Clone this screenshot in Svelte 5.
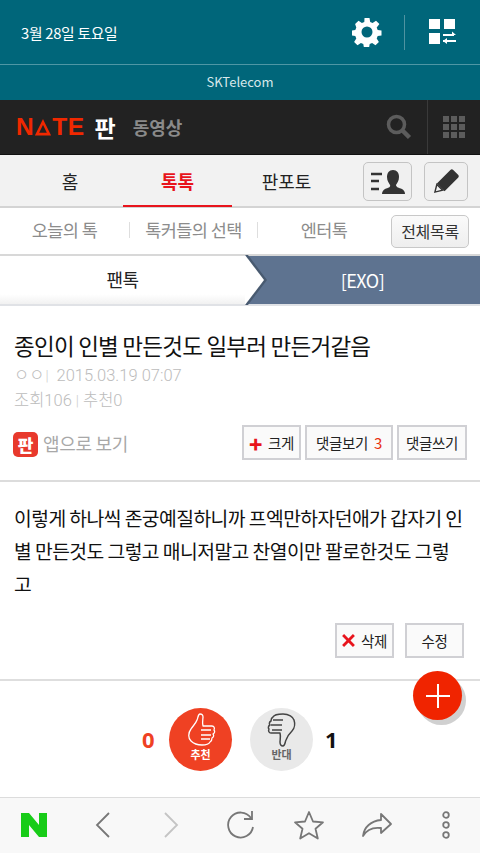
<script>
  const tabs = ["홈", "톡톡", "판포토"];
  const subs = ["오늘의 톡", "톡커들의 선택", "엔터톡"];
</script>

<div class="page">
  <div class="panel-top">
    <span class="date">3월 28일 토요일</span>
    <svg class="gear" viewBox="0 0 30 30" width="30" height="30" aria-hidden="true">
      <path fill="#fff" fill-rule="evenodd" d="M12.500 1h5l.7 4 2.400 1 3.400-2.300 3.400 3.400L24.700 10.500l1 2.400 3.800.7v4.800l-3.800.7-1 2.400 2.200 3.400-3.400 3.400-3.400-2.300-2.400 1-.7 3.900h-5l-.7-3.900-2.400-1-3.400 2.300-3.400-3.400 2.200-3.400-1-2.400-3.800-.7v-4.800l3.800-.7 1-2.400L3.100 7.100l3.400-3.400L9.900 6l2.400-1zM15 9.500a5.500 5.500 0 1 0 0 11 5.500 5.500 0 0 0 0-11z"/>
    </svg>
    <i class="top-sep"></i>
    <svg class="layout" viewBox="0 0 28 28" width="28" height="28" aria-hidden="true">
      <path fill="#fff" d="M0 1h11v10H0zM15 1h11v10H15zM0 15h11v11H0z"/>
      <path fill="none" stroke="#fff" stroke-width="2" d="M14 17h11M14 23h13"/>
      <path fill="#fff" d="M23 13.500l4 3.500h-4zM18 20v6l-4-3z"/>
    </svg>
  </div>
  <div class="carrier">SKTelecom</div>

  <header class="nate">
    <div class="logo">N<svg viewBox="0 0 16 16" width="16" height="17" aria-hidden="true"><path fill="none" stroke="#f02800" stroke-width="2.600" d="M8 2.500 14 14.600H2z"/></svg>TE</div>
    <span class="pan">판</span>
    <span class="section">동영상</span>
    <svg class="search" viewBox="0 0 26 26" width="26" height="26" aria-hidden="true">
      <circle cx="10.500" cy="10.500" r="8" fill="none" stroke="#5c5c5c" stroke-width="3.500"/>
      <path d="M16.500 16.500 23.500 23.500" stroke="#5c5c5c" stroke-width="4.500"/>
    </svg>
    <div class="apps">
      <div class="dots">
        {#each Array(9) as _}<i></i>{/each}
      </div>
    </div>
  </header>

  <nav class="tabs">
    <div class="tab-list">
      {#each tabs as t, i}
        <span class="tab" class:on={i === 1}>{t}</span>
      {/each}
    </div>
    <button class="tool tool-user" aria-label="내 정보">
      <svg viewBox="0 0 36 26" width="36" height="26" aria-hidden="true">
        <path stroke="#333" stroke-width="2.400" d="M1 5h11M1 12h8M1 20h8"/>
        <path fill="#333" d="M23 1c4 0 6 3 6 7s-2 6-3 8c0 2 3 3 6 4 2 1 3 3 3 5H12c0-2 1-4 3-5 3-1 6-2 5-4-1-2-3-4-3-8s2-7 6-7z"/>
      </svg>
    </button>
    <button class="tool tool-edit" aria-label="글쓰기">
      <svg viewBox="0 0 28 28" width="27" height="27" aria-hidden="true">
        <path fill="#333" d="M18 2c1-1 2-1 3 0l5 5c1 1 1 2 0 3L12 24l-8-8z"/>
        <path fill="none" stroke="#333" stroke-width="1.500" d="M4 17l-2 8 8-2z"/>
      </svg>
    </button>
  </nav>

  <div class="subnav">
    <div class="sub-list">
      {#each subs as s, i}
        {#if i > 0}<i class="sub-sep"></i>{/if}
        <span class="sub sub-{i}">{s}</span>
      {/each}
    </div>
    <button class="all">전체목록</button>
  </div>

  <div class="crumb">
    <span class="crumb-left">팬톡</span>
    <span class="crumb-right">[EXO]</span>
    <svg class="arrow" viewBox="0 0 24 50" width="24" height="50" preserveAspectRatio="none" aria-hidden="true">
      <path fill="#485a70" d="M0 0h3l19 25L3 50H0z"/>
      <path fill="#fff" d="M0 0l19 25L0 50z"/>
    </svg>
  </div>

  <section class="head">
    <h1>종인이 인별 만든것도 일부러 만든거같음</h1>
    <div class="meta">ㅇㅇ<span class="bar">|</span> 2015.03.19 07:07</div>
    <div class="stats">조회106 <span class="bar">|</span> 추천0</div>
    <div class="actions">
      <div class="badge">판</div>
      <span class="app-link">앱으로 보기</span>
      <div class="btns">
        <button class="btn big"><span class="plus">+</span> 크게</button>
        <button class="btn more">댓글보기 <em>3</em></button>
        <button class="btn write">댓글쓰기</button>
      </div>
    </div>
  </section>

  <article class="body">
    <p>이렇게 하나씩 존궁예질하니까 프엑만하자던애가 갑자기 인별 만든것도 그렇고 매니저말고 찬열이만 팔로한것도 그렇고</p>
    <div class="edit-btns">
      <button class="btn del"><svg viewBox="0 0 12 12" width="13" height="13" aria-hidden="true"><path stroke="#e8141c" stroke-width="2.600" d="M1 1l10 10M11 1 1 11"/></svg> 삭제</button>
      <button class="btn fix">수정</button>
    </div>
  </article>

  <section class="votes">
    <span class="count up">0</span>
    <div class="vote vote-up">
      <svg viewBox="0 0 30 34" width="30" height="34" aria-hidden="true">
        <path fill="none" stroke="#fff" stroke-width="1.300" stroke-linejoin="round" d="M14 1c-2 0-2 4-3 6-1 3-4 6-6 9-3 4-3 9 0 12 3 3 7 4 11 4 4 0 7-1 8-3 2-1 2-3 2-4 2-1 2-3 1-4 2-1 2-3 1-4 1-2 0-4-2-4h-9c-1-4 0-7 0-9s-1-3-3-3zM15 17h10M15 22h10M15 26h9"/>
      </svg>
      <span>추천</span>
    </div>
    <div class="vote vote-down">
      <svg viewBox="0 0 30 34" width="30" height="34" aria-hidden="true">
        <path fill="none" stroke="#444" stroke-width="1.500" stroke-linejoin="round" d="M16 33c2 0 2-4 3-6 1-3 3-6 6-9 3-3 3-8 2-11-1-3-5-6-11-6-5 0-9 1-10 3-2 1-2 3-2 4-2 1-2 3-1 4-2 1-2 3-1 4-1 2 0 4 2 4h9c1 4 0 7 0 9s1 4 3 4zM15 17H5M15 12H4M16 7H6"/>
      </svg>
      <span>반대</span>
    </div>
    <span class="count down">1</span>
    <button class="fab" aria-label="추가">
      <svg viewBox="0 0 24 24" width="24" height="24" aria-hidden="true"><path stroke="#fff" stroke-width="2" d="M12 0v24M0 12h24"/></svg>
    </button>
  </section>

  <footer class="browser">
    <svg viewBox="0 0 26 24" width="26" height="24" aria-hidden="true"><path fill="#18cc18" d="M0 0h8l10 12V0h8v24h-8L8 12v12H0z"/></svg>
    <svg viewBox="0 0 16 28" width="16" height="28" aria-hidden="true"><path fill="none" stroke="#777" stroke-width="1.800" d="M14 2 2 14l12 12"/></svg>
    <svg viewBox="0 0 16 28" width="16" height="28" aria-hidden="true"><path fill="none" stroke="#c4c4c4" stroke-width="1.800" d="M2 2l12 12L2 26"/></svg>
    <svg viewBox="0 0 30 30" width="30" height="30" aria-hidden="true"><path fill="none" stroke="#777" stroke-width="1.800" d="M26 8A12.500 12.500 0 1 0 28 17"/><path fill="none" stroke="#777" stroke-width="1.800" d="M27 1v8h-8"/></svg>
    <svg viewBox="0 0 32 30" width="32" height="30" aria-hidden="true"><path fill="none" stroke="#777" stroke-width="1.800" stroke-linejoin="round" d="M16 2l4 9.500 10 .8-7.500 6.500 2.300 9.700L16 23.200l-8.800 5.300 2.300-9.700L2 12.300l10-.8z"/></svg>
    <svg viewBox="0 0 32 26" width="32" height="26" aria-hidden="true"><path fill="none" stroke="#777" stroke-width="1.800" stroke-linejoin="round" d="M20 2l10 10-10 9v-5c-8-1-14 1-18 8 1-9 8-15 18-16z"/></svg>
    <svg viewBox="0 0 10 28" width="10" height="28" aria-hidden="true"><g fill="none" stroke="#777" stroke-width="1.800"><circle cx="5" cy="4" r="2.800"/><circle cx="5" cy="14" r="2.800"/><circle cx="5" cy="24" r="2.800"/></g></svg>
  </footer>
</div>

<style>
  :global(body) {
    margin: 0;
    background: #fff;
    font-family: "Noto Sans CJK KR", "Noto Sans", sans-serif;
  }

  .page {
    width: 480px;
    height: 853px;
    overflow: hidden;
    display: flex;
    flex-direction: column;
  }

  button {
    font-family: inherit;
    padding: 0;
    cursor: pointer;
  }

  .panel-top {
    height: 65px;
    box-sizing: border-box;
    display: flex;
    align-items: center;
    padding: 0 23px 0 21px;
    background: #00667a;
    border-bottom: 1px solid #4f97a5;
    flex: none;
  }

  .date {
    color: #fff;
    font-size: 14.800px;
    letter-spacing: -0.3px;
    margin-right: auto;
  }

  .top-sep {
    width: 1px;
    height: 35px;
    margin: 0 24px 0 22px;
    background: #4f93a1;
  }

  .carrier {
    height: 35px;
    flex: none;
    box-sizing: border-box;
    padding-bottom: 2px;
    display: flex;
    align-items: center;
    justify-content: center;
    background: #00667a;
    color: #d7e8eb;
    font-size: 13px;
  }

  .nate {
    height: 55px;
    flex: none;
    display: flex;
    align-items: center;
    box-sizing: border-box;
    padding-left: 16px;
    background: #222;
    border-bottom: 1px solid #111;
  }

  .logo {
    display: flex;
    align-items: center;
    gap: 1px;
    color: #f02800;
    font: 700 24.500px/1 "Liberation Sans", sans-serif;
    letter-spacing: 0.5px;
  }

  .pan {
    margin-left: 10px;
    color: #fff;
    font-size: 23px;
    font-weight: 700;
  }

  .section {
    margin-left: 17px;
    color: #8a8a8a;
    font-size: 18px;
    font-weight: 700;
    margin-right: auto;
  }

  .search {
    margin-right: 15px;
  }

  .apps {
    width: 53px;
    height: 100%;
    display: flex;
    align-items: center;
    justify-content: center;
    border-left: 1px solid #3a3a3a;
    box-sizing: border-box;
  }

  .dots {
    display: grid;
    grid-template-columns: repeat(3, 6px);
    gap: 2px;
  }

  .dots i {
    height: 6px;
    background: #5c5c5c;
  }

  .tabs {
    height: 53px;
    flex: none;
    box-sizing: border-box;
    display: flex;
    align-items: flex-start;
    background: #f2f2f2;
    border-bottom: 2px solid #d4d4d4;
  }

  .tab-list {
    display: flex;
    height: 52px;
    margin-left: 14px;
    margin-right: auto;
  }

  .tab {
    width: 109px;
    box-sizing: border-box;
    height: 52px;
    padding-top: 11px;
    text-align: center;
    color: #222;
    font-size: 18px;
    line-height: 30px;
  }

  .tab:first-child {
    padding-left: 3px;
  }

  .tab.on {
    color: #e8141c;
    font-weight: 700;
    border-bottom: 2px solid #e8141c;
  }

  .tool {
    height: 39px;
    margin-top: 7px;
    box-sizing: border-box;
    display: flex;
    align-items: center;
    justify-content: center;
    background: #f0f0f0;
    border: 1px solid #c4c4c4;
    border-radius: 5px;
  }

  .tool-user {
    width: 49px;
    margin-right: 12px;
  }

  .tool-edit {
    width: 44px;
    margin-right: 12px;
  }

  .subnav {
    height: 48px;
    flex: none;
    box-sizing: border-box;
    display: flex;
    align-items: center;
    background: #fff;
    border-bottom: 2px solid #d8d8d8;
  }

  .sub-list {
    display: flex;
    align-items: center;
    margin-right: auto;
    height: 100%;
    box-sizing: border-box;
    padding-bottom: 3px;
  }

  .sub {
    color: #8c8c8c;
    font-size: 17.500px;
    letter-spacing: -0.6px;
    text-align: center;
  }

  .sub-0 {
    width: 129px;
  }

  .sub-1 {
    width: 127px;
  }

  .sub-2 {
    width: 132px;
  }

  .sub-sep {
    width: 1px;
    height: 16px;
    background: #dedede;
  }

  .all {
    width: 78px;
    height: 33px;
    margin-right: 11px;
    box-sizing: border-box;
    background: linear-gradient(#fafafa, #eee);
    border: 1px solid #c8c8c8;
    border-radius: 5px;
    color: #333;
    font-size: 16px;
    letter-spacing: -0.3px;
  }

  .crumb {
    position: relative;
    height: 50px;
    flex: none;
    box-sizing: border-box;
    display: grid;
    grid-template-columns: 245px 1fr;
    align-items: center;
    background: #5e7390;
    border-bottom: 2px solid #e0e2e6;
    text-align: center;
    font-size: 18px;
    letter-spacing: -0.5px;
  }

  .crumb-left {
    height: 100%;
    line-height: 46px;
    color: #222;
    background: linear-gradient(#fff 80%, #f1f1f1);
  }

  .crumb-right {
    color: #fff;
  }

  .arrow {
    position: absolute;
    left: 245px;
    top: -1px;
  }

  .head {
    flex: none;
    height: 176px;
    box-sizing: border-box;
    padding: 23px 13px 0 14px;
    border-bottom: 2px solid #dcdcdc;
  }

  h1 {
    margin: 0;
    color: #111;
    font-size: 22.500px;
    font-weight: 400;
    line-height: 32px;
    letter-spacing: -0.75px;
    white-space: nowrap;
  }

  .meta {
    margin-top: 3px;
    color: #bcbcbc;
    font: 300 16.500px/24px Roboto, "Noto Sans CJK KR", sans-serif;
    white-space: nowrap;
  }

  .bar {
    color: #ccc;
    font-size: 14px;
    margin: 0 4px 0 1px;
  }

  .stats {
    margin-top: 1px;
    color: #bcbcbc;
    font: 300 16.500px/24px Roboto, "Noto Sans CJK KR", sans-serif;
  }

  .stats .bar {
    margin: 0;
  }

  .actions {
    display: flex;
    align-items: center;
    margin-top: 12px;
  }

  .badge {
    width: 25px;
    height: 25px;
    border-radius: 5px;
    display: flex;
    align-items: center;
    justify-content: center;
    background: #e8392c;
    color: #fff;
    font-size: 17px;
    font-weight: 900;
    line-height: 1;
    margin-top: 3px;
    margin-left: -1px;
  }

  .app-link {
    margin-left: 5px;
    color: #a8a8a8;
    font-size: 18px;
    letter-spacing: -0.3px;
    margin-right: auto;
  }

  .btns {
    display: flex;
    gap: 4px;
  }

  .btn {
    height: 35px;
    box-sizing: border-box;
    display: inline-flex;
    align-items: center;
    justify-content: center;
    gap: 3px;
    background: #fafafa;
    border: 2px solid #d0d0d4;
    color: #222;
    font-size: 14.500px;
    letter-spacing: -0.3px;
    white-space: pre;
  }

  .btn em {
    color: #e8300e;
    font-style: normal;
    font-size: 15px;
  }

  .plus {
    color: #e8141c;
    font-size: 22px;
    font-weight: 900;
    line-height: 1;
  }

  .big {
    width: 59px;
  }

  .more {
    width: 88px;
  }

  .write {
    width: 70px;
  }

  .body {
    flex: none;
    height: 199px;
    box-sizing: border-box;
    padding: 20px 14px 0;
    border-bottom: 2px solid #dedede;
    display: flex;
    flex-direction: column;
  }

  .body p {
    margin: 0;
    color: #111;
    font-size: 19.300px;
    line-height: 33px;
    letter-spacing: -0.55px;
    word-break: break-all;
  }

  .edit-btns {
    display: flex;
    justify-content: flex-end;
    gap: 11px;
    margin-top: 22px;
    margin-right: 2px;
  }

  .del,
  .fix {
    width: 59px;
  }

  .votes {
    position: relative;
    flex: 1;
    display: flex;
    align-items: center;
    padding-left: 142px;
    box-sizing: border-box;
  }

  .count {
    font-size: 22px;
    font-weight: 700;
    line-height: 1;
  }

  .count.up {
    color: #ef4123;
    width: 27px;
    font-family: "Noto Sans", sans-serif;
  }

  .count.down {
    color: #111;
    margin-left: 12px;
    font-family: "Noto Sans", sans-serif;
  }

  .vote {
    width: 63px;
    height: 63px;
    border-radius: 50%;
    display: flex;
    flex-direction: column;
    align-items: center;
    padding-top: 5px;
    box-sizing: border-box;
    font-size: 11px;
    font-weight: 700;
    line-height: 14px;
    margin-right: 18px;
  }

  .vote-up {
    background: #ef4123;
    color: #fff;
  }

  .vote-down {
    background: #e9e9e9;
    color: #666;
    margin-right: 0;
  }

  .fab {
    position: absolute;
    top: -10px;
    right: 18px;
    width: 49px;
    height: 49px;
    display: flex;
    align-items: center;
    justify-content: center;
    border: none;
    border-radius: 50%;
    background: #f02400;
    box-shadow: 4px 5px 0 #d0d0d0;
  }

  .browser {
    height: 56px;
    flex: none;
    box-sizing: border-box;
    display: grid;
    grid-template-columns: repeat(7, 1fr);
    justify-items: center;
    align-items: center;
    padding: 0 0 1px;
    margin-top: auto;
    background: #f8f8f8;
    border-top: 1px solid #dcdcdc;
  }
</style>
